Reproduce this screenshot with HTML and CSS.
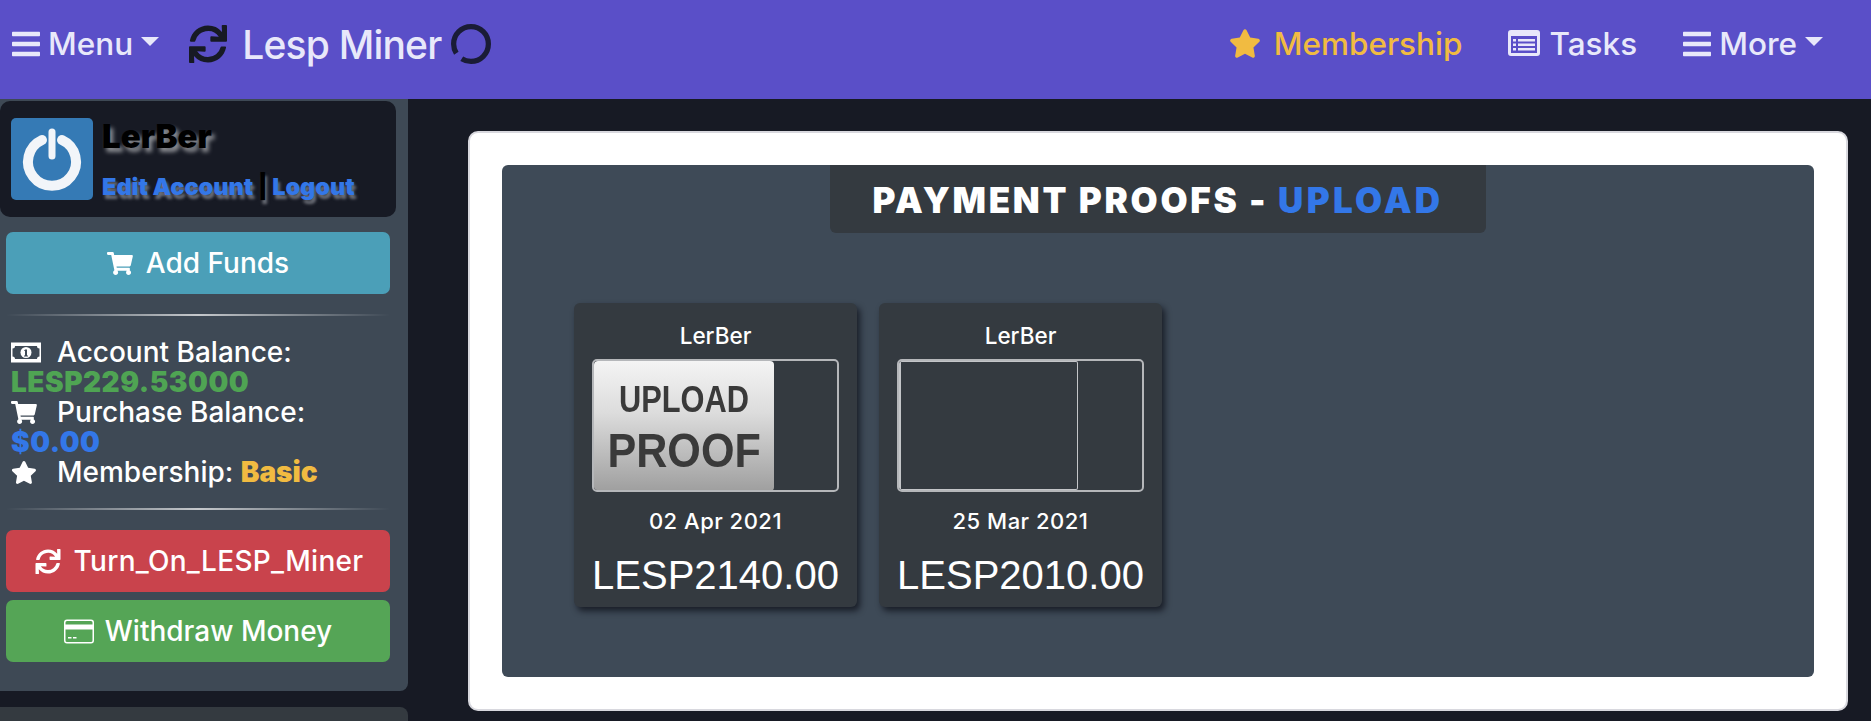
FILE: index.html
```html
<!DOCTYPE html>
<html lang="en">
<head>
    <meta charset="UTF-8">
    <meta name="viewport" content="width=device-width, initial-scale=1.0">
    <title>Lesp Miner - Payment Proofs</title>
    <link rel="stylesheet" href="styles.css">
</head>
<body>
    <svg class="icon-defs" width="0" height="0">
        <symbol id="i-bars" viewBox="0 0 448 512"><path d="M16 132h416c8.837 0 16-7.163 16-16V76c0-8.837-7.163-16-16-16H16C7.163 60 0 67.163 0 76v40c0 8.837 7.163 16 16 16zm0 160h416c8.837 0 16-7.163 16-16v-40c0-8.837-7.163-16-16-16H16c-8.837 0-16 7.163-16 16v40c0 8.837 7.163 16 16 16zm0 160h416c8.837 0 16-7.163 16-16v-40c0-8.837-7.163-16-16-16H16c-8.837 0-16 7.163-16 16v40c0 8.837 7.163 16 16 16z"/></symbol>
        <symbol id="i-star" viewBox="0 0 576 512" preserveAspectRatio="xMinYMid"><path d="M259.3 17.8L194 150.2 47.9 171.5c-26.2 3.8-36.7 36.1-17.7 54.6l105.7 103-25 145.5c-4.5 26.3 23.2 46 46.4 33.7L288 439.6l130.7 68.7c23.2 12.2 50.9-7.4 46.4-33.7l-25-145.5 105.7-103c19-18.5 8.5-50.8-17.7-54.6L382 150.2 316.7 17.8c-11.7-23.6-45.6-23.9-57.4 0z"/></symbol>
        <symbol id="i-sync" viewBox="0 0 512 512"><path d="M440.65 12.57l4 82.77A247.16 247.16 0 0 0 255.83 8C134.73 8 33.91 94.92 12.29 209.82A12 12 0 0 0 24.09 224h49.05a12 12 0 0 0 11.67-9.26 175.91 175.91 0 0 1 317-56.94l-101.46-4.86a12 12 0 0 0-12.57 12v47.41a12 12 0 0 0 12 12H500a12 12 0 0 0 12-12V12a12 12 0 0 0-12-12h-47.37a12 12 0 0 0-11.98 12.57zM255.83 432a175.61 175.61 0 0 1-146-77.8l101.8 4.87a12 12 0 0 0 12.57-12v-47.4a12 12 0 0 0-12-12H12a12 12 0 0 0-12 12V500a12 12 0 0 0 12 12h47.35a12 12 0 0 0 12-12.6l-4.15-82.57A247.17 247.17 0 0 0 255.83 504c121.11 0 221.93-86.92 243.55-201.82a12 12 0 0 0-11.8-14.18h-49.05a12 12 0 0 0-11.67 9.26A175.86 175.86 0 0 1 255.83 432z"/></symbol>
        <symbol id="i-cart" viewBox="0 0 576 512" preserveAspectRatio="xMinYMid"><path d="M528.12 301.319l47.273-208C578.806 78.301 567.391 64 551.99 64H159.208l-9.166-44.81C147.758 8.021 137.93 0 126.529 0H24C10.745 0 0 10.745 0 24v16c0 13.255 10.745 24 24 24h69.883l70.248 343.435C147.325 417.1 136 435.222 136 456c0 30.928 25.072 56 56 56s56-25.072 56-56c0-15.674-6.447-29.835-16.824-40h209.647C430.447 426.165 424 440.326 424 456c0 30.928 25.072 56 56 56s56-25.072 56-56c0-22.172-12.888-41.332-31.579-50.405l5.517-24.276c3.413-15.018-8.002-29.319-23.403-29.319H218.117l-6.545-32h293.145c11.206 0 20.92-7.754 23.403-18.681z"/></symbol>
        <symbol id="i-money" viewBox="0 0 30 20"><path fill-rule="evenodd" d="M0 0h30v20H0zM4 3.500Q4 6 1.500 6v8Q4 14 4 16.500h22q0-2.500 2.500-2.500V6Q26 6 26 3.500z"/><circle cx="15" cy="10" r="5.500"/><path d="M14 7h2v6h1v1h-4v-1h1V8.500h-1z" fill="#3e4955"/></symbol>
        <symbol id="i-card" viewBox="0 0 30 24"><path fill-rule="evenodd" d="M3 0h24a3 3 0 0 1 3 3v18a3 3 0 0 1-3 3H3a3 3 0 0 1-3-3V3a3 3 0 0 1 3-3zM1.500 10v11A1.500 1.500 0 0 0 3 22.500h24a1.500 1.500 0 0 0 1.500-1.500V10zM1.500 3v2h27V3A1.500 1.500 0 0 0 27 1.500H3A1.500 1.500 0 0 0 1.500 3z"/><path d="M4 17.500h3.500V19H4zM9 17.500h3.500V19H9z"/></symbol>
        <symbol id="i-list" viewBox="0 0 32 26"><path fill-rule="evenodd" d="M3 0h26a3 3 0 0 1 3 3v20a3 3 0 0 1-3 3H3a3 3 0 0 1-3-3V3a3 3 0 0 1 3-3zM3 6v17h26V6z"/><path d="M5 9h3v2.500H5zM10 9h17v2.500H10zM5 13.500h3V16H5zM10 13.500h17V16H10zM5 18h3v2.500H5zM10 18h17v2.500H10z"/></symbol>
    </svg>

    <header class="navbar">
        <a class="nav-link nav-menu"><svg class="ico bars"><use href="#i-bars"/></svg>Menu<span class="caret"></span></a>
        <svg class="ico brand-sync"><use href="#i-sync"/></svg>
        <span class="brand">Lesp Miner</span>
        <svg class="brand-spinner" viewBox="0 0 38 38"><circle cx="19" cy="19" r="16.500" pathLength="100" stroke-dasharray="93 7" stroke-dashoffset="-41"/></svg>
        <nav class="nav-right">
            <a class="nav-link nav-gold"><svg class="ico star"><use href="#i-star"/></svg>Membership</a>
            <a class="nav-link"><svg class="ico list"><use href="#i-list"/></svg>Tasks</a>
            <a class="nav-link"><svg class="ico bars"><use href="#i-bars"/></svg>More<span class="caret"></span></a>
        </nav>
    </header>

    <div class="layout">
        <div class="side-col">
            <aside class="sidebar">
                <div class="user-box">
                    <div class="avatar">
                        <svg viewBox="0 0 80 80"><path d="M30 21a24 24 0 1 0 20 0" fill="none" stroke="#f2f5f9" stroke-width="10" stroke-linecap="round"/><path d="M40 13v24" stroke="#f2f5f9" stroke-width="7" stroke-linecap="round"/></svg>
                    </div>
                    <div class="user-text">
                        <div class="user-name">LerBer</div>
                        <div class="user-links"><a>Edit Account</a> <span class="sep">|</span> <a>Logout</a></div>
                    </div>
                </div>

                <a class="btn btn-info"><svg class="ico"><use href="#i-cart"/></svg>Add Funds</a>
                <hr class="fade-line">

                <div class="balances">
                    <div class="bal-row"><svg class="ico bal-ico"><use href="#i-money"/></svg>Account Balance:</div>
                    <div class="bal-val green">LESP229.53000</div>
                    <div class="bal-row"><svg class="ico bal-ico"><use href="#i-cart"/></svg>Purchase Balance:</div>
                    <div class="bal-val blue">$0.00</div>
                    <div class="bal-row"><svg class="ico bal-ico"><use href="#i-star"/></svg>Membership: <b class="gold">Basic</b></div>
                </div>
                <hr class="fade-line second">

                <a class="btn btn-danger"><svg class="ico"><use href="#i-sync"/></svg>Turn_On_LESP_Miner</a>
                <a class="btn btn-success"><svg class="ico"><use href="#i-card"/></svg>Withdraw Money</a>
            </aside>
            <div class="side-next"></div>
        </div>

        <main class="content">
            <div class="white-card">
                <section class="panel">
                    <h2 class="panel-title">PAYMENT PROOFS - <span class="blue">UPLOAD</span></h2>
                    <div class="proofs">
                        <div class="proof">
                            <div class="proof-user">LerBer</div>
                            <div class="proof-img">
                                <div class="upload-pic"><span class="up1">UPLOAD</span><span class="up2">PROOF</span></div>
                            </div>
                            <div class="proof-date">02 Apr 2021</div>
                            <div class="proof-amt">LESP2140.00</div>
                        </div>
                        <div class="proof">
                            <div class="proof-user">LerBer</div>
                            <div class="proof-img">
                                <div class="empty-pic"></div>
                            </div>
                            <div class="proof-date">25 Mar 2021</div>
                            <div class="proof-amt">LESP2010.00</div>
                        </div>
                    </div>
                </section>
            </div>
        </main>
    </div>
</body>
</html>
```

FILE: styles.css
```css
:root {
    --nav-bg: #5a4fc8;
    --nav-text: #e8e8fa;
    --dark: #171a24;
    --side-bg: #3e4955;
    --panel-bg: #3e4a57;
    --card-bg: #343a40;
    --blue: #3377e8;
    --green: #4fa453;
    --gold: #f1bb41;
}

* {
    box-sizing: border-box;
}

html, body {
    height: 721px;
    overflow: hidden;
}

body {
    margin: 0;
    background: var(--dark);
    color: #fff;
    font-family: 'Inter', 'Liberation Sans', sans-serif;
    font-weight: 500;
}

.icon-defs {
    position: absolute;
}

.ico {
    fill: currentColor;
    flex: none;
}

/* top bar */
.navbar {
    height: 99px;
    background: var(--nav-bg);
    color: var(--nav-text);
    display: flex;
    align-items: flex-start;
    padding: 25px 48px 0 12px;
}

.nav-link {
    display: flex;
    align-items: center;
    height: 38px;
    font-size: 31.500px;
    line-height: 38px;
}

.bars {
    width: 28px;
    height: 32px;
    margin-right: 8px;
}

.caret {
    width: 0;
    height: 0;
    margin: -5px 0 0 8px;
    border-top: 9px solid currentColor;
    border-left: 9px solid transparent;
    border-right: 9px solid transparent;
}

.brand-sync {
    width: 42px;
    height: 38px;
    margin: 0 13px 0 28px;
    color: var(--dark);
}

.brand {
    font-size: 39px;
    line-height: 40px;
    letter-spacing: -0.8px;
}

.brand-spinner {
    width: 40px;
    height: 40px;
    margin: -1px 0 0 9px;
}

.brand-spinner circle {
    fill: none;
    stroke: #1a1c36;
    stroke-width: 5;
}

.nav-right {
    margin-left: auto;
    display: flex;
    gap: 46px;
}

.nav-gold {
    color: var(--gold);
}

.star {
    width: 32px;
    height: 29px;
    margin: -2px 13px 0 0;
}

.list {
    width: 32px;
    height: 26px;
    margin: -2px 9px 0 0;
}

/* layout */
.layout {
    display: flex;
    height: 622px;
}

.side-col {
    width: 408px;
    flex: none;
}

.sidebar {
    height: 592px;
    background: var(--side-bg);
    border-bottom-right-radius: 8px;
    padding: 2px 18px 0 6px;
}

.side-next {
    height: 30px;
    margin-top: 16px;
    background: var(--card-bg);
    border-radius: 0 8px 0 0;
}

.user-box {
    display: flex;
    height: 116px;
    width: 396px;
    margin-left: -6px;
    padding: 17px 11px;
    background: var(--dark);
    border-radius: 10px;
    gap: 9px;
}

.avatar {
    width: 82px;
    height: 82px;
    flex: none;
    background: #357ab5;
    border-radius: 5px;
    padding: 1px;
}

.avatar svg {
    display: block;
    filter: blur(0.6px);
}

.user-name {
    color: #000;
    font-size: 33px;
    font-weight: 900;
    line-height: 36px;
    text-shadow: 3px 4px 4px #8d8f94;
}

.user-links {
    margin-top: 19px;
    font-size: 23.500px;
    font-weight: 900;
    line-height: 28px;
    color: var(--blue);
    text-shadow: 2px 4px 3px #6c6f78;
    white-space: nowrap;
}

.sep {
    color: #000;
}

.btn {
    display: flex;
    align-items: center;
    justify-content: center;
    height: 62px;
    width: 384px;
    border-radius: 7px;
    font-size: 28px;
    color: #fff;
}

.btn .ico {
    width: 30px;
    height: 25px;
    margin-right: 11px;
}

.btn-info {
    margin-top: 15px;
    background: #4b9fb8;
}

.btn-info .ico {
    width: 26px;
    height: 23px;
    margin-right: 13px;
}

.btn-danger {
    background: #c9434c;
    letter-spacing: 0.3px;
}

.btn-success {
    margin-top: 8px;
    background: #55a556;
}

.fade-line {
    height: 2px;
    margin: 20px 0 0;
    border: 0;
    background: linear-gradient(to right, rgba(255, 255, 255, 0), rgba(255, 255, 255, 0.7), rgba(255, 255, 255, 0));
}

.fade-line.second {
    margin: 21px 0 20px;
}

.balances {
    margin: 21px 0 0 5px;
    font-size: 28px;
}

.bal-row {
    display: flex;
    align-items: center;
    height: 30px;
    line-height: 30px;
    white-space: pre;
}

.bal-ico {
    width: 30px;
    height: 23px;
    margin-right: 16px;
}

.bal-val {
    height: 30px;
    font-weight: 900;
    line-height: 30px;
    letter-spacing: 0.5px;
}

.green {
    color: var(--green);
}

.blue {
    color: var(--blue);
}

.gold {
    color: var(--gold);
    font-weight: 900;
}

/* main area */
.content {
    flex: 1;
    padding: 32px 23px 0 60px;
}

.white-card {
    height: 580px;
    background: #fff;
    border: 2px solid #d8d8de;
    border-radius: 10px;
    padding: 32px;
}

.panel {
    height: 512px;
    background: var(--panel-bg);
    border-radius: 6px;
}

.panel-title {
    width: 656px;
    height: 68px;
    margin: 0 auto;
    background: var(--card-bg);
    border-radius: 0 0 6px 6px;
    text-align: center;
    font-size: 35px;
    font-weight: 900;
    line-height: 70px;
    letter-spacing: 2.700px;
}

.panel-title .blue {
    letter-spacing: 3.300px;
}

.proofs {
    display: flex;
    gap: 22px;
    padding: 70px 0 0 72px;
}

.proof {
    width: 283px;
    height: 304px;
    background: var(--card-bg);
    border-radius: 6px;
    box-shadow: 3px 4px 6px rgba(10, 12, 20, 0.7);
    text-align: center;
    padding: 17px 18px 0;
}

.proof-user {
    height: 39px;
    font-size: 22.500px;
    line-height: 32px;
}

.proof-img {
    width: 247px;
    height: 133px;
    border: 2px solid #b5b7ba;
    border-radius: 5px;
    overflow: hidden;
}

.upload-pic {
    width: 180px;
    height: 130px;
    background: linear-gradient(#f4f4f4, #dcdcdc 40%, #9f9f9f);
    color: #3a3a3a;
    border-radius: 4px;
    display: flex;
    flex-direction: column;
    align-items: center;
    font-family: 'Liberation Sans', sans-serif;
    font-weight: 700;
}

.up1 {
    margin-top: 21px;
    font-size: 36px;
    line-height: 36px;
    transform: scaleX(0.855);
}

.up2 {
    margin-top: 7px;
    font-size: 49px;
    line-height: 50px;
    transform: scaleX(0.88);
}

.empty-pic {
    width: 179px;
    height: 129px;
    border: 1px solid #c3c5c8;
    border-left-width: 2px;
    border-radius: 2px;
}

.proof-date {
    margin-top: 14px;
    font-size: 22px;
    line-height: 30px;
    letter-spacing: 0.5px;
}

.proof-amt {
    margin-top: 16px;
    font-family: 'Liberation Sans', sans-serif;
    font-size: 40px;
    font-weight: 400;
    line-height: 46px;
    white-space: nowrap;
}
```
